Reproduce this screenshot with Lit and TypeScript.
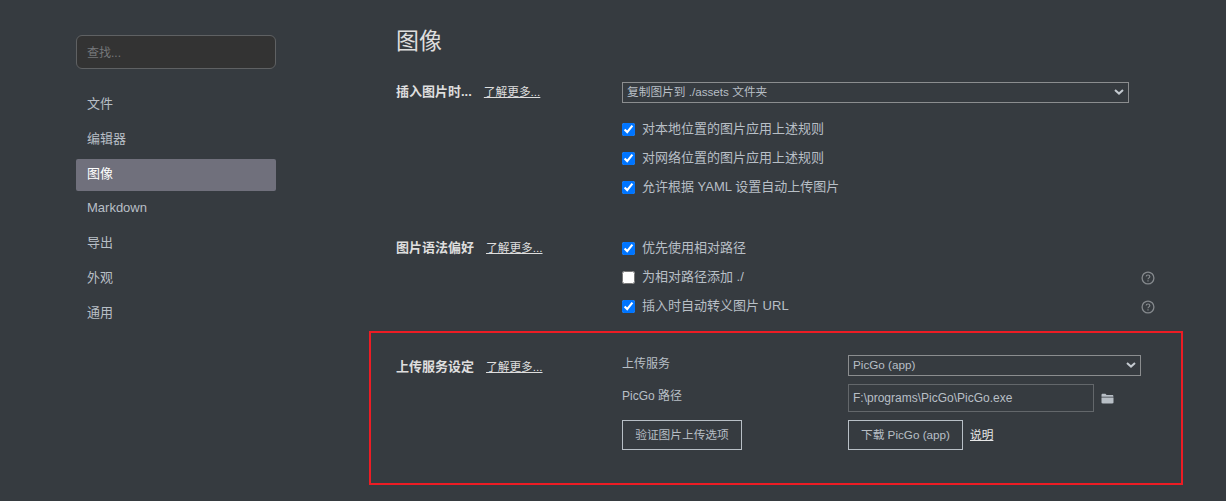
import { LitElement, html, css } from 'lit';
import { customElement } from 'lit/decorators.js';

const NAV = ['文件', '编辑器', '图像', 'Markdown', '导出', '外观', '通用'];

const chevron = html`<svg class="chevron" width="10" height="6" viewBox="0 0 10 6"><path d="M1 1l4 3.6L9 1" fill="none" stroke="currentColor" stroke-width="2"/></svg>`;

const help = html`<svg class="help" width="14" height="14" viewBox="0 0 14 14" fill="none" stroke="currentColor">
  <circle cx="7" cy="7" r="5.9" stroke-width="1.3"/>
  <path d="M5.2 5.6c0-1 .8-1.6 1.8-1.6s1.8.6 1.8 1.5c0 1.3-1.8 1.4-1.8 2.7" stroke-width="1.2"/>
  <path d="M7 9.3v1.2" stroke-width="1.2"/>
</svg>`;

const folder = html`<svg class="folder" width="13" height="11" viewBox="0 0 13 11"><path d="M0.5 2.2C0.5 1.3 1 .8 1.8 .8h2.6l1.2 1.3h5.6c.8 0 1.2.4 1.2 1.1v.6H.5z" fill="currentColor"/><path d="M.5 4.6h12v4.6c0 .8-.4 1.2-1.2 1.2H1.7c-.8 0-1.2-.4-1.2-1.2z" fill="currentColor"/></svg>`;

@customElement('app-root')
export class AppRoot extends LitElement {
  static styles = css`
    :host {
      display: flex;
      height: 501px;
      overflow: hidden;
      background: #363b40;
      color: #b8bfc6;
      font: 13px/1.2 'Liberation Sans', 'Noto Sans CJK SC', sans-serif;
    }
    * { box-sizing: border-box; }

    .sidebar {
      width: 276px;
      flex: none;
      padding: 35px 0 0 76px;
    }
    .search {
      display: block;
      width: 200px;
      height: 34px;
      padding: 1px 10px 0;
      margin-bottom: 20px;
      border: 1px solid #5f6163;
      border-radius: 6px;
      background: #333333;
      color: #b8bfc6;
      font: inherit;
      font-size: 12px;
    }
    .search::placeholder { color: #75777a; }
    .nav-item {
      height: 32px;
      margin-bottom: 2.8px;
      padding-left: 11px;
      border-radius: 2px;
      line-height: 30px;
    }
    .nav-item.active {
      background: #70707c;
      color: #fff;
    }

    .main {
      width: 814px;
      flex: none;
      margin-left: 93px;
      padding-top: 25px;
    }
    h1 {
      margin: 0 0 25px 27px;
      font-size: 23px;
      font-weight: 400;
      line-height: 32px;
      color: #dedede;
    }
    .section {
      display: grid;
      grid-template-columns: 226px 1fr;
      padding-left: 27px;
    }
    .insert { padding-right: 54px; }
    .syntax { padding-right: 28px; margin-top: 32px; }
    .upload {
      margin-top: 10px;
      height: 154px;
      padding: 22px 40px 0 25px;
      border: 2px solid #ed1c24;
    }
    .heading {
      display: flex;
      align-items: baseline;
      gap: 12px;
      font-weight: 700;
      color: #dedede;
      line-height: 18px;
    }
    .insert .heading { padding-top: 1px; }
    .syntax .heading { padding-top: 5px; }
    .upload .heading { padding-top: 3px; }
    .link {
      color: #dedede;
      font-size: 11.7px;
      font-weight: 400;
      text-decoration: underline;
    }

    .select-wrap {
      position: relative;
      display: block;
    }
    select {
      display: block;
      width: 100%;
      height: 21px;
      padding: 0 0 0 4px;
      border: 1px solid #8b8d8f;
      border-radius: 0;
      outline: none;
      appearance: none;
      background: transparent;
      color: #b8bfc6;
      font: inherit;
      font-size: 11.7px;
    }
    .chevron {
      position: absolute;
      top: 7px;
      right: 5px;
      color: #c4cad0;
      pointer-events: none;
    }
    .insert select { margin-bottom: 12px; }

    .check {
      display: flex;
      align-items: center;
      height: 29px;
    }
    .check input {
      width: 13px;
      height: 13px;
      margin: 0 7px 0 0;
      flex: none;
    }
    .check span { padding-bottom: 1px; }
    .help {
      margin-left: auto;
      color: #85898d;
    }

    .form {
      display: grid;
      grid-template-columns: 226px 1fr;
      align-content: start;
      row-gap: 8px;
      font-size: 12px;
    }
    .form label { line-height: 18px; }
    .form label.path-label { padding-top: 3px; }
    .path-row {
      display: flex;
      align-items: center;
      gap: 7px;
    }
    .path-row input {
      width: 246px;
      height: 28px;
      padding: 0 4px 1px;
      border: 1px solid #63676b;
      outline: none;
      background: transparent;
      color: #b8bfc6;
      font: inherit;
    }
    .folder { color: #b8bfc6; }
    .btn {
      height: 30px;
      border: 1px solid #b8bfc6;
      background: transparent;
      color: #b8bfc6;
      font: inherit;
      font-size: 11.7px;
      padding: 0;
    }
    .btn.verify { width: 120px; justify-self: start; }
    .btn.download { width: 115px; }
    .download-row {
      display: flex;
      align-items: center;
      gap: 7px;
    }
    .download-row .link { color: #e6e6e6; }
  `;

  renderCheck(label: string, checked: boolean, hasHelp = false) {
    return html`<label class="check">
      <input type="checkbox" ?checked=${checked} />
      <span>${label}</span>
      ${hasHelp ? help : ''}
    </label>`;
  }

  render() {
    return html`
      <aside class="sidebar">
        <input class="search" placeholder="查找..." />
        ${NAV.map((item) => html`<div class="nav-item ${item === '图像' ? 'active' : ''}">${item}</div>`)}
      </aside>
      <main class="main">
        <h1>图像</h1>

        <section class="section insert">
          <div class="heading"><span>插入图片时...</span><a class="link">了解更多...</a></div>
          <div>
            <div class="select-wrap">
              <select><option>复制图片到 ./assets 文件夹</option></select>
              ${chevron}
            </div>
            ${this.renderCheck('对本地位置的图片应用上述规则', true)}
            ${this.renderCheck('对网络位置的图片应用上述规则', true)}
            ${this.renderCheck('允许根据 YAML 设置自动上传图片', true)}
          </div>
        </section>

        <section class="section syntax">
          <div class="heading"><span>图片语法偏好</span><a class="link">了解更多...</a></div>
          <div>
            ${this.renderCheck('优先使用相对路径', true)}
            ${this.renderCheck('为相对路径添加 ./', false, true)}
            ${this.renderCheck('插入时自动转义图片 URL', true, true)}
          </div>
        </section>

        <section class="section upload">
          <div class="heading"><span>上传服务设定</span><a class="link">了解更多...</a></div>
          <div class="form">
            <label>上传服务</label>
            <div class="select-wrap">
              <select><option>PicGo (app)</option></select>
              ${chevron}
            </div>
            <label class="path-label">PicGo 路径</label>
            <div class="path-row">
              <input value="F:\\programs\\PicGo\\PicGo.exe" />
              ${folder}
            </div>
            <button class="btn verify">验证图片上传选项</button>
            <div class="download-row">
              <button class="btn download">下载 PicGo (app)</button>
              <a class="link">说明</a>
            </div>
          </div>
        </section>
      </main>
    `;
  }
}
